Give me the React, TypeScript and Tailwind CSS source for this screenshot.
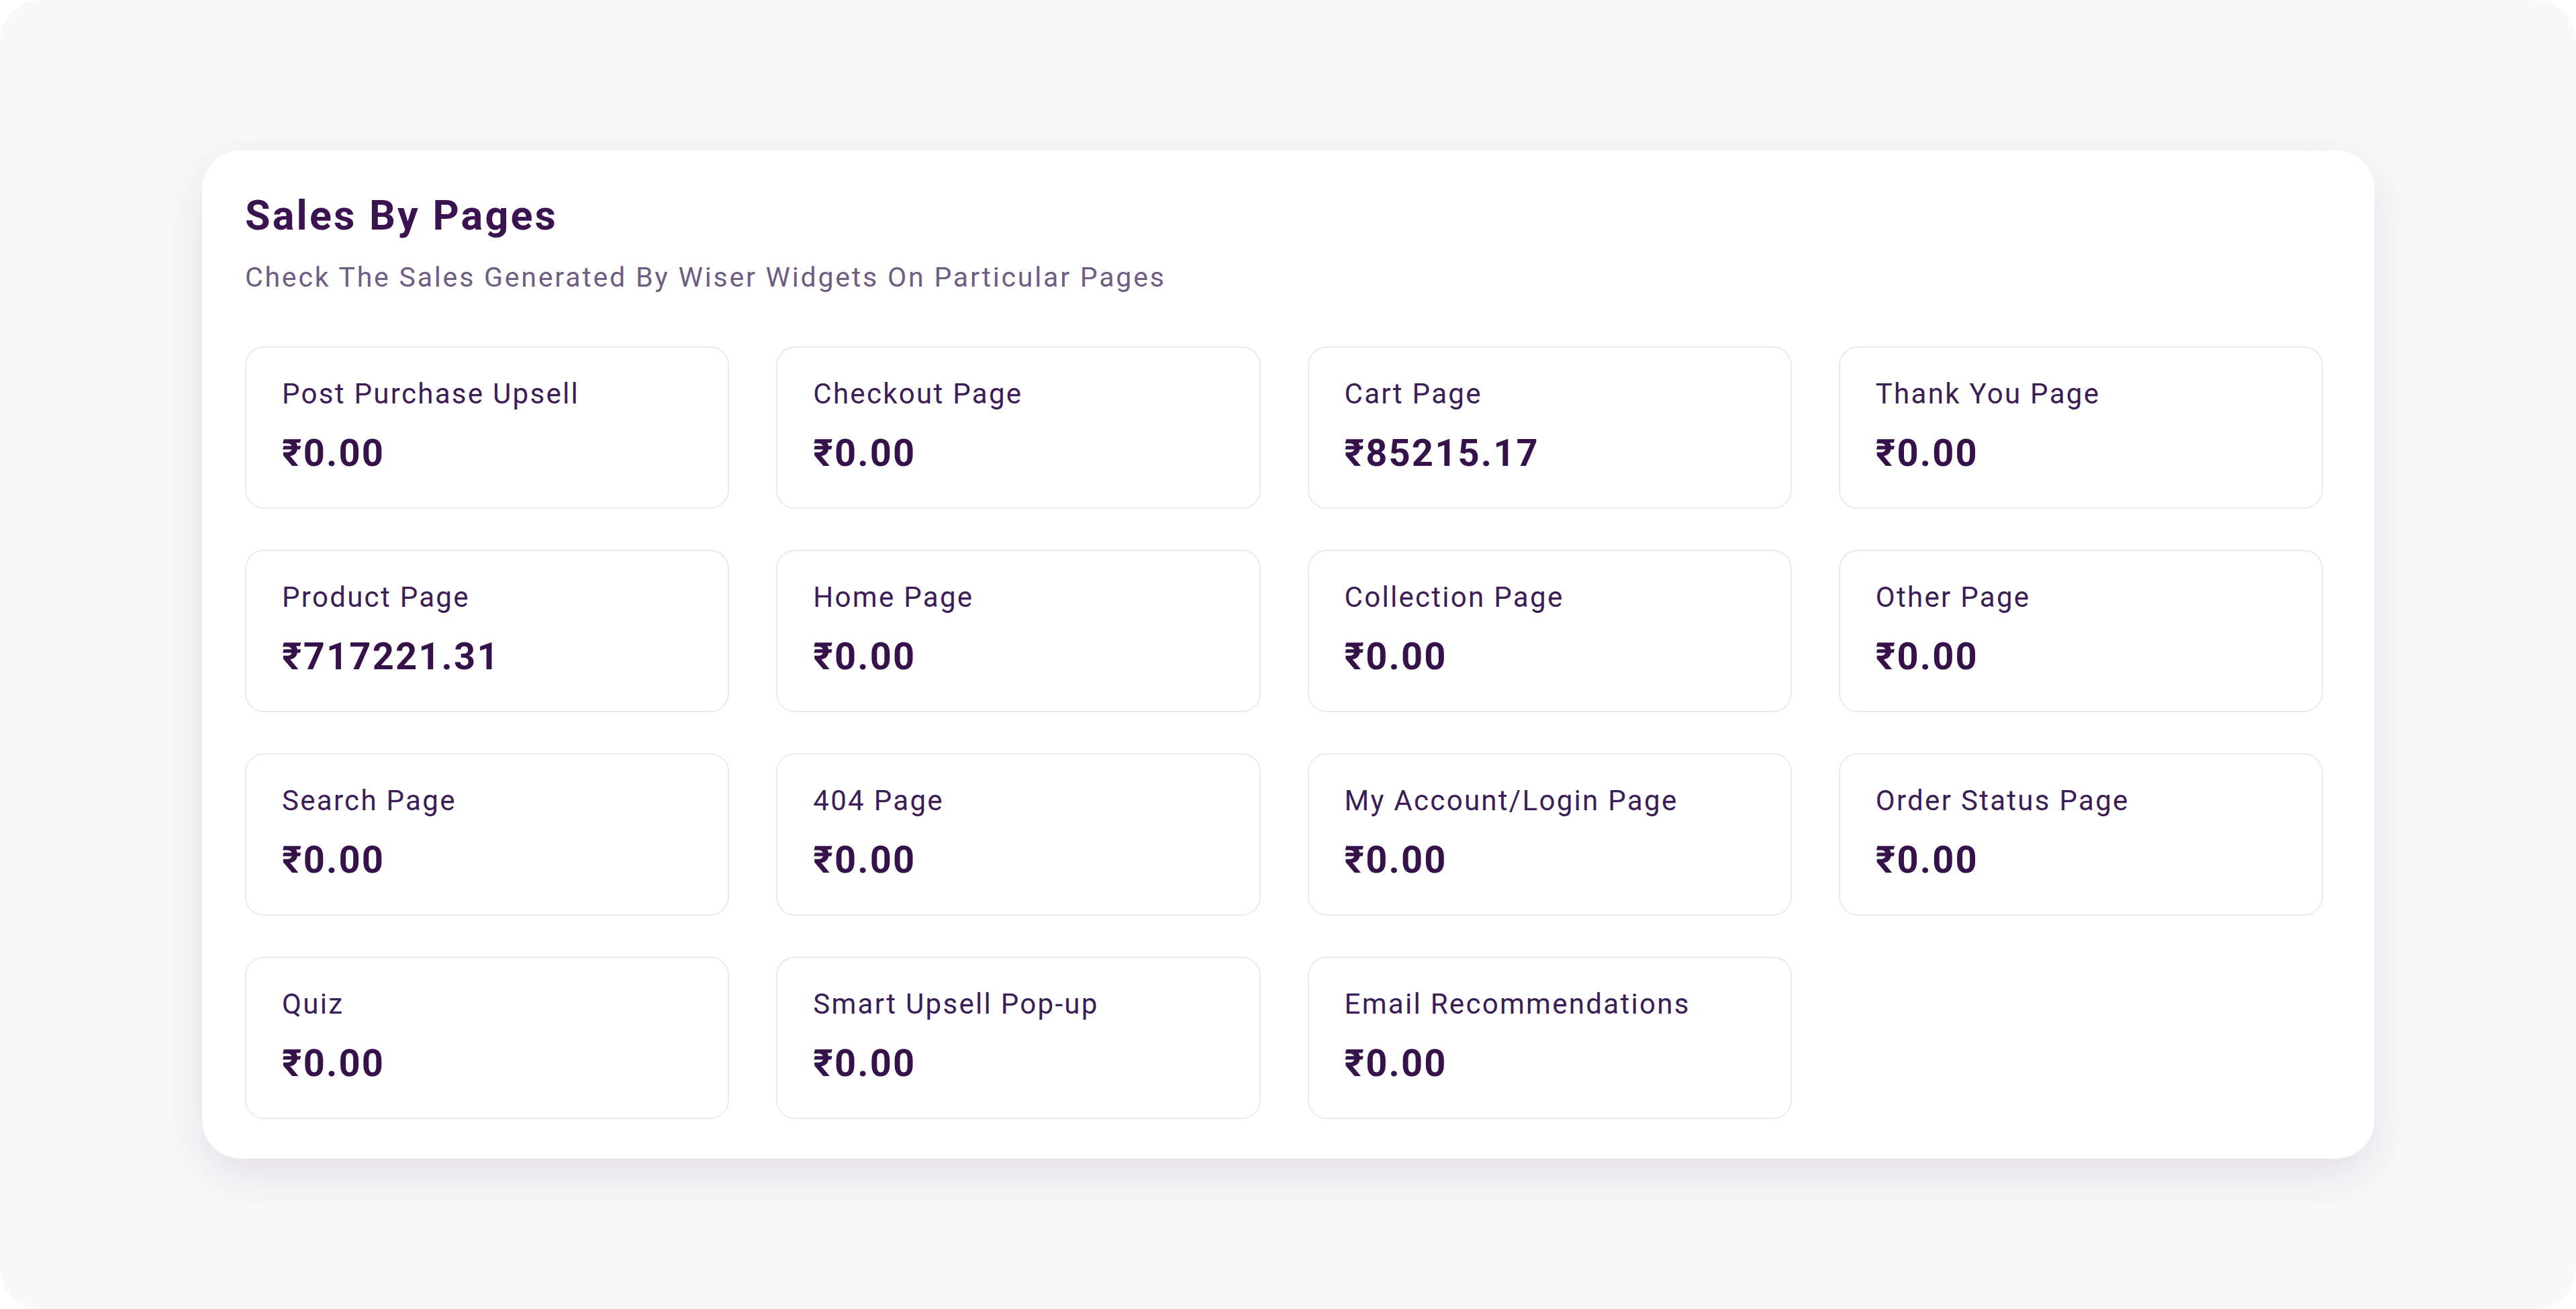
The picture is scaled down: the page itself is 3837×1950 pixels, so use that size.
import React from "react";

const items: { label: string; value: string }[] = [
  { label: "Post Purchase Upsell", value: "₹0.00" },
  { label: "Checkout Page", value: "₹0.00" },
  { label: "Cart Page", value: "₹85215.17" },
  { label: "Thank You Page", value: "₹0.00" },
  { label: "Product Page", value: "₹717221.31" },
  { label: "Home Page", value: "₹0.00" },
  { label: "Collection Page", value: "₹0.00" },
  { label: "Other Page", value: "₹0.00" },
  { label: "Search Page", value: "₹0.00" },
  { label: "404 Page", value: "₹0.00" },
  { label: "My Account/Login Page", value: "₹0.00" },
  { label: "Order Status Page", value: "₹0.00" },
  { label: "Quiz", value: "₹0.00" },
  { label: "Smart Upsell Pop-up", value: "₹0.00" },
  { label: "Email Recommendations", value: "₹0.00" },
];

export default function App() {
  return (
    <div
      className="w-[3837px] h-[1950px] bg-white"
      style={{ fontFamily: "Roboto, 'Noto Sans', sans-serif" }}
    >
      <div className="w-full h-full rounded-[60px] bg-[#f9f9f9] pt-[224px] pl-[301px]">
        <div className="w-[3236px] bg-white rounded-[58px] shadow-[0_24px_70px_rgba(70,50,90,0.13)] pl-[64px] pt-[61px] pb-[59px]">
          <h1 className="text-[61px] leading-[72px] font-bold tracking-[3.2px] text-[#3a1350]">
            Sales By Pages
          </h1>
          <p className="mt-[32px] text-[41px] leading-[49px] tracking-[2.8px] text-[#6f5d82]">
            Check The Sales Generated By Wiser Widgets On Particular Pages
          </p>
          <div className="mt-[78px] w-[3095px] grid grid-cols-4 gap-x-[70px] gap-y-[61px]">
            {items.map((it) => (
              <div
                key={it.label}
                className="h-[242px] rounded-[28px] border-2 border-[#ebe9ef] bg-white pl-[53px] pr-[20px] pt-[44px]"
              >
                <div className="text-[42px] leading-[50px] tracking-[2.3px] text-[#3d1d55]">
                  {it.label}
                </div>
                <div className="mt-[30px] text-[56px] leading-[66px] font-bold tracking-[2.2px] text-[#36124a]">
                  {it.value}
                </div>
              </div>
            ))}
          </div>
        </div>
      </div>
    </div>
  );
}
